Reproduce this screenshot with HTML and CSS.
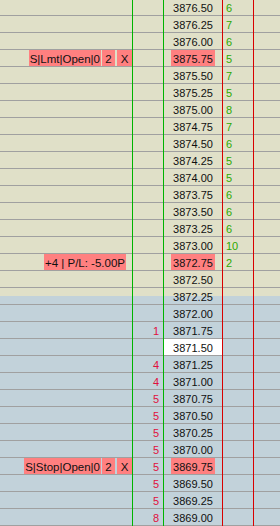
FILE: index.html
```html
<!DOCTYPE html>
<html>
<head>
    <title>Price Ladder</title>
    <link rel="stylesheet" href="styles.css">
</head>
<body>
<div class="ladder">
    <div class="col col-orders" id="colOrders"></div>
    <div class="col col-bid" id="colBid"></div>
    <div class="col col-price" id="colPrice"></div>
    <div class="col col-vol" id="colVol"></div>
    <div class="col col-blank" id="colBlank"></div>
</div>

<script>
    const topPrice = 3876.50;
    const rowCount = 31;
    const lastPrice = "3871.50";

    // volume traded at price (green), index = row
    const volumes = [6, 7, 6, 5, 7, 5, 8, 7, 6, 5, 5, 6, 6, 6, 10, 2];
    // bid size (red), keyed by row
    const bids = { 19: 1, 21: 4, 22: 4, 23: 5, 24: 5, 25: 5, 26: 5, 27: 5, 28: 5, 29: 5, 30: 8 };

    const orders = {
        3: { parts: ["S|Lmt|Open|0", "2", "X"] },
        15: { pl: "+4 | P/L: -5.00P" },
        27: { parts: ["S|Stop|Open|0", "2", "X"] }
    };

    function cell(parent, extra) {
        const div = document.createElement("div");
        div.className = "cell" + (extra ? " " + extra : "");
        parent.appendChild(div);
        return div;
    }

    const colOrders = document.getElementById("colOrders");
    const colBid = document.getElementById("colBid");
    const colPrice = document.getElementById("colPrice");
    const colVol = document.getElementById("colVol");
    const colBlank = document.getElementById("colBlank");

    for (let i = 0; i < rowCount; i++) {
        const price = (topPrice - i * 0.25).toFixed(2);
        const order = orders[i];

        const o = cell(colOrders, "cell-order");
        if (order && order.parts) {
            o.innerHTML = `<span class="tag tag-text">${order.parts[0]}</span>
                           <span class="tag tag-qty">${order.parts[1]}</span>
                           <span class="tag tag-x">${order.parts[2]}</span>`;
        } else if (order && order.pl) {
            o.innerHTML = `<span class="tag tag-pl">${order.pl}</span>`;
        }

        const b = cell(colBid, "cell-bid");
        if (bids[i] !== undefined) b.innerText = bids[i];

        const p = cell(colPrice, price === lastPrice ? "cell-price cell-last" : "cell-price");
        if (order) {
            p.innerHTML = `<span class="price-mark">${price}</span>`;
        } else {
            p.innerText = price;
        }

        const v = cell(colVol, "cell-vol");
        if (volumes[i] !== undefined) v.innerText = volumes[i];

        cell(colBlank);
    }
</script>
</body>
</html>
```

FILE: styles.css
```css
html, body {
    margin: 0;
    background-color: #C2D2DA;
}

.ladder {
    display: flex;
    margin-top: -1px;
    background: linear-gradient(to bottom, #E0E0C8 297px, #C2D2DA 297px);
    font-family: "Liberation Sans", Arial, sans-serif;
    font-size: 11px;
    color: #101010;
}

.col { border-right: 1px solid #00B400; }
.col-orders { width: 132px; }
.col-bid { width: 30px; }
.col-price { width: 58px; border-right-color: #D80000; }
.col-vol { width: 30px; border-right-color: #D80000; }
.col-blank { flex: 1; border-right: none; }

.cell {
    height: 16px;
    line-height: 18px;
    border-bottom: 1px solid #A0A0A0;
    white-space: nowrap;
}

.cell-order {
    display: flex;
    justify-content: flex-end;
}

.tag {
    display: inline-block;
    height: 16px;
    font-size: 11.5px;
    background-color: #FF8080;
    text-align: center;
}
.tag-text { padding: 0 1px; }
.tag-qty { width: 13px; margin-left: 1px; }
.tag-x { width: 15px; margin-left: 2px; }
.tag-pl { padding: 0 1px; margin-right: 6px; }

.cell-bid {
    text-align: right;
    padding-right: 4px;
    color: #E0103C;
}

.cell-price { text-align: center; }
.cell-last { background-color: #FFFFFF; }

.price-mark {
    display: inline-block;
    height: 16px;
    padding: 0 2px;
    vertical-align: top;
    background-color: #FF8080;
}

.cell-vol {
    padding-left: 3px;
    color: #2EA800;
}
```
